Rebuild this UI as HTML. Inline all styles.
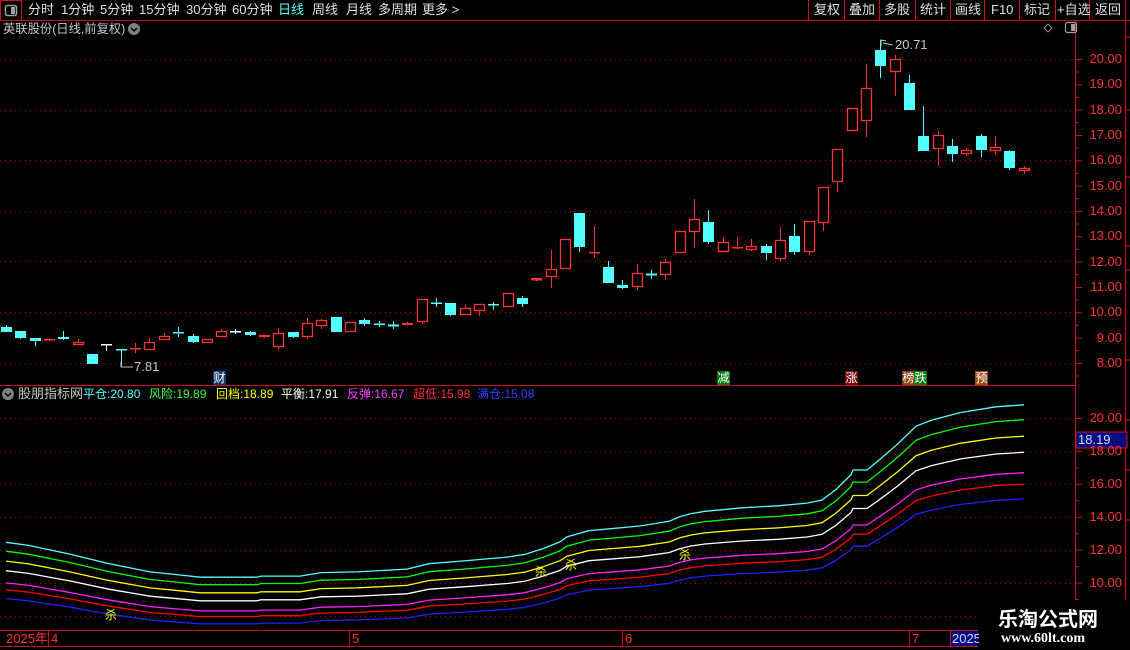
<!DOCTYPE html>
<html><head><meta charset="utf-8">
<style>
*{margin:0;padding:0;box-sizing:border-box}
body{width:1130px;height:650px;background:#000;overflow:hidden;position:relative;font-family:"Liberation Sans","Noto Sans CJK SC",sans-serif;font-size:13px;color:#fff}
.t{position:absolute;white-space:nowrap;line-height:14px}
.lg{font-size:12px}
svg{position:absolute;left:0;top:0}
.mk{position:absolute;width:13px;height:14px;font-size:12px;line-height:14px;text-align:center;color:#fff}
</style></head><body>
<svg id="s" width="1130" height="650" viewBox="0 0 1130 650" xmlns="http://www.w3.org/2000/svg">
<g id="grid" stroke="#c00000" stroke-width="1" stroke-dasharray="1,4">
<line x1="0" y1="59.5" x2="1075" y2="59.5"/><line x1="0" y1="110.5" x2="1075" y2="110.5"/><line x1="0" y1="160.5" x2="1075" y2="160.5"/><line x1="0" y1="211.5" x2="1075" y2="211.5"/><line x1="0" y1="261.5" x2="1075" y2="261.5"/><line x1="0" y1="312.5" x2="1075" y2="312.5"/><line x1="0" y1="363.5" x2="1075" y2="363.5"/>
<line x1="0" y1="418.5" x2="1075" y2="418.5"/><line x1="0" y1="451.5" x2="1075" y2="451.5"/><line x1="0" y1="484.5" x2="1075" y2="484.5"/><line x1="0" y1="517.5" x2="1075" y2="517.5"/><line x1="0" y1="550.5" x2="1075" y2="550.5"/><line x1="0" y1="583.5" x2="1075" y2="583.5"/><line x1="0" y1="616.5" x2="1075" y2="616.5"/>
</g>
<g stroke="#d01010" stroke-width="1" fill="none">
<line x1="0" y1="20.5" x2="1130" y2="20.5"/>
<rect x="0.5" y="0.5" width="21" height="20"/>
<line x1="808.5" y1="0" x2="808.5" y2="20"/><line x1="844.5" y1="0" x2="844.5" y2="20"/><line x1="879.5" y1="0" x2="879.5" y2="20"/><line x1="915.5" y1="0" x2="915.5" y2="20"/><line x1="950.5" y1="0" x2="950.5" y2="20"/><line x1="984.5" y1="0" x2="984.5" y2="20"/><line x1="1019.5" y1="0" x2="1019.5" y2="20"/><line x1="1055.5" y1="0" x2="1055.5" y2="20"/><line x1="1089.5" y1="0" x2="1089.5" y2="20"/><line x1="1125.5" y1="0" x2="1125.5" y2="20"/>
<line x1="1075.5" y1="20" x2="1075.5" y2="650"/>
<line x1="1125.5" y1="20" x2="1125.5" y2="600"/>
<line x1="0" y1="385.5" x2="1075" y2="385.5"/>
<line x1="0" y1="630.5" x2="978" y2="630.5"/>
<line x1="0" y1="646.5" x2="978" y2="646.5"/>
<line x1="48.5" y1="630" x2="48.5" y2="646"/><line x1="349.5" y1="630" x2="349.5" y2="646"/><line x1="622.5" y1="630" x2="622.5" y2="646"/><line x1="909.5" y1="630" x2="909.5" y2="646"/><line x1="950.5" y1="630" x2="950.5" y2="646"/>
</g>
<g id="ticks" stroke="#d01010"></g>
<g id="lines" fill="none" stroke-width="1.3"></g>
<g id="candles"></g>
<rect x="5.5" y="5.5" width="11" height="10" rx="2" fill="none" stroke="#a0a0a0" stroke-width="1.5"/>
<rect x="11" y="7" width="4" height="7" fill="#a0a0a0"/>
<rect x="1065.5" y="22.5" width="11" height="10" rx="2" fill="none" stroke="#a0a0a0" stroke-width="1.2"/>
<rect x="1071" y="24" width="4" height="7" fill="#a0a0a0"/>
<path d="M1048 24 L1052 28 L1048 32 L1044 28 Z" fill="none" stroke="#909090"/>
<circle cx="134" cy="29" r="6" fill="#808080"/><path d="M131 28 L134 31 L137 28" fill="none" stroke="#000" stroke-width="1.5"/>
<circle cx="8" cy="394" r="6" fill="#808080"/><path d="M5 393 L8 396 L11 393" fill="none" stroke="#000" stroke-width="1.5"/>
<path d="M121 367 L121 362 M121 367 L133 367" stroke="#c0c0c0" fill="none"/>
<path d="M881 47 L881 40 L886 41 M883 43 L893 45" stroke="#c0c0c0" fill="none"/>
<rect x="1076" y="432" width="51" height="16" fill="#0a0a80" stroke="#d01010"/>
<rect x="951" y="631" width="27" height="15" fill="#0a0a80"/>
</svg>

<div class="t" style="left:28px;top:3px;color:#e0e0e0">分时</div>
<div class="t" style="left:61px;top:3px;color:#e0e0e0">1分钟</div>
<div class="t" style="left:100px;top:3px;color:#e0e0e0">5分钟</div>
<div class="t" style="left:139px;top:3px;color:#e0e0e0">15分钟</div>
<div class="t" style="left:186px;top:3px;color:#e0e0e0">30分钟</div>
<div class="t" style="left:232px;top:3px;color:#e0e0e0">60分钟</div>
<div class="t" style="left:278px;top:3px;color:#54ffff">日线</div>
<div class="t" style="left:312px;top:3px;color:#e0e0e0">周线</div>
<div class="t" style="left:346px;top:3px;color:#e0e0e0">月线</div>
<div class="t" style="left:378px;top:3px;color:#e0e0e0">多周期</div>
<div class="t" style="left:422px;top:3px;color:#e0e0e0">更多 &gt;</div>

<div class="t" style="left:814px;top:3px;color:#e0e0e0">复权</div>
<div class="t" style="left:849px;top:3px;color:#e0e0e0">叠加</div>
<div class="t" style="left:884px;top:3px;color:#e0e0e0">多股</div>
<div class="t" style="left:920px;top:3px;color:#e0e0e0">统计</div>
<div class="t" style="left:955px;top:3px;color:#e0e0e0">画线</div>
<div class="t" style="left:991px;top:3px;color:#e0e0e0">F10</div>
<div class="t" style="left:1024px;top:3px;color:#e0e0e0">标记</div>
<div class="t" style="left:1057px;top:3px;color:#e0e0e0">+自选</div>
<div class="t" style="left:1095px;top:3px;color:#e0e0e0">返回</div>

<div class="t" style="left:3px;top:22px;color:#c8c8c8;font-size:12.3px">英联股份(日线,前复权)</div>
<div class="t" style="left:895px;top:38px;color:#c8c8c8">20.71</div>
<div class="t" style="left:134px;top:360px;color:#c8c8c8">7.81</div>

<div class="mk" style="left:213px;top:371px;background:#123a6e">财</div>
<div class="mk" style="left:717px;top:371px;background:#0a7a10">减</div>
<div class="mk" style="left:845px;top:371px;background:#7a0a0a">涨</div>
<div class="mk" style="left:902px;top:371px;background:#8a4010">榜</div>
<div class="mk" style="left:914px;top:371px;background:#0a7a10">跌</div>
<div class="mk" style="left:975px;top:371px;background:#a04a10">预</div>

<div class="t" style="left:18px;top:387px;color:#c8c8c8">股朋指标网</div>
<div class="t lg" style="left:83px;top:387px;color:#54ffff">平仓:20.80</div>
<div class="t lg" style="left:149px;top:387px;color:#40ff40">风险:19.89</div>
<div class="t lg" style="left:216px;top:387px;color:#ffff00">回档:18.89</div>
<div class="t lg" style="left:281px;top:387px;color:#ffffff">平衡:17.91</div>
<div class="t lg" style="left:347px;top:387px;color:#ff40ff">反弹:16.67</div>
<div class="t lg" style="left:413px;top:387px;color:#ff3030">超低:15.98</div>
<div class="t lg" style="left:477px;top:387px;color:#3040ff">满仓:15.08</div>

<div class="t" style="left:105px;top:608px;color:#ffff00;font-size:12px">杀</div>
<div class="t" style="left:535px;top:565px;color:#ffff00;font-size:12px">杀</div>
<div class="t" style="left:565px;top:558px;color:#ffff00;font-size:12px">杀</div>
<div class="t" style="left:679px;top:548px;color:#ffff00;font-size:12px">杀</div>

<div id="ax"></div>
<div class="t" style="left:1078px;top:433px;color:#c8d8ff">18.19</div>

<div class="t" style="left:6px;top:632px;color:#ff3232">2025年</div>
<div class="t" style="left:51px;top:632px;color:#ff3232">4</div>
<div class="t" style="left:352px;top:632px;color:#ff3232">5</div>
<div class="t" style="left:625px;top:632px;color:#ff3232">6</div>
<div class="t" style="left:912px;top:632px;color:#ff3232">7</div>
<div class="t" style="left:952px;top:632px;color:#c8d8ff">2025</div>

<div style="position:absolute;left:979px;top:600px;width:151px;height:50px;background:#000"></div>
<div class="t" style="left:998px;top:609px;font-size:20px;line-height:22px;font-weight:bold;color:#fff">乐淘公式网</div>
<div class="t" style="left:1001px;top:632px;font-family:'Liberation Serif',serif;font-size:14px;font-weight:bold;color:#fff">www.60lt.com</div>

<script>
var NS="http://www.w3.org/2000/svg";
function el(p,n,a){var e=document.createElementNS(NS,n);for(var k in a)e.setAttribute(k,a[k]);p.appendChild(e);return e;}
var C=[[6,327,332,325,332,'c'],[20,331,338,331,339,'c'],[35,338,341,338,346,'c'],[49,339,340,338,341,'r'],[63,337,339,331,340,'c'],[78,342,345,339,345,'r'],[92,354,364,354,364,'c'],[106,344,345,344,351,'w'],[121,349,350,349,367,'c'],[135,348,349.5,343,353,'r'],[149,342,350,338,350,'r'],[164,336,340,333,340,'r'],[178,332,333.5,327,337,'c'],[193,336,342,334,343,'c'],[207,339,343,339,343,'r'],[221,331,337,329,337,'r'],[235,331,332.5,329,334,'w'],[250,332,335,331,336,'c'],[264,335,337,335,338,'r'],[278,333,347,328,350,'r'],[293,332,337,332,338,'c'],[307,323,337,318,339,'r'],[321,320,326,319,329,'r'],[336,317,332,317,332,'c'],[350,322,332,322,332,'r'],[364,320,324,318,326,'c'],[379,323.5,325,321,327,'c'],[393,324.5,326.5,321,329,'c'],[407,323,325,322,325,'r'],[422,299,322,299,324,'r'],[436,302.5,304,298,307,'c'],[450,303,315,303,316,'c'],[465,308,315,304,315,'r'],[479,304,311,304,316,'r'],[493,304,305.5,302,310,'c'],[508,293,307,293,307,'r'],[522,298,304,296,307,'c'],[536,278,280.5,278,281,'r'],[551,269,277,250,288,'r'],[565,239,269,239,269,'r'],[579,213,247,213,252,'c'],[594,252,253.5,226,258,'r'],[608,267,283,261,283,'c'],[622,285,288,280,289,'c'],[637,273,287,264,290,'r'],[651,273.5,275.5,270,279,'c'],[665,262,275,259,280,'r'],[680,231,253,231,253,'r'],[694,219,232,199,248,'r'],[708,222,242,210,244,'c'],[723,242,252,237,252,'r'],[737,247,248.5,237,249,'r'],[751,246,250,239,251,'r'],[766,246,253,244,260,'c'],[780,240,259,227,261,'r'],[794,236,252,224,255,'c'],[809,221,252,221,255,'r'],[823,187,223,187,231,'r'],[837,149,182,149,192,'r'],[852,108,131,108,131,'r'],[866,88,121,64,137,'r'],[880,50,66,40,78,'c'],[895,59,72,55,96,'r'],[909,83,110,75,110,'c'],[923,136,151,106,151,'c'],[938,135,149,131,166,'r'],[952,146,154,139,162,'c'],[966,150,154,148,156,'r'],[981,136,150,134,157,'c'],[995,147,151,136,155,'r'],[1009,151,168,150,170,'c'],[1024,168,171,166,174,'r']];
var g=document.getElementById('candles');
C.forEach(function(c){var x=c[0],col=c[5]=='c'?'#54ffff':(c[5]=='w'?'#ffffff':'#ff3232');
el(g,'line',{x1:x+.5,y1:c[3],x2:x+.5,y2:c[4],stroke:col,'stroke-width':1});
var h=c[2]-c[1];
if(h<3){el(g,'rect',{x:x-5,y:c[1],width:11,height:Math.max(1.5,h),fill:col});}
else if(c[5]=='r'){el(g,'rect',{x:x-4.5,y:c[1]+.5,width:10,height:h-1,fill:'#000',stroke:col,'stroke-width':1.3});}
else{el(g,'rect',{x:x-5,y:c[1],width:11,height:h,fill:col});}
});
var W=[[6,571.3],[28.6,574],[71,581.7],[107,589.3],[150,596.7],[179,599.3],[200,601.3],[257,601.3],[261,600.3],[300,600.3],[321,597.3],[357,596.7],[371,596],[407,594.3],[429,589.7],[464,587.3],[507,584],[525,581.7],[543,576.7],[560,571],[567,566.7],[589,561.3],[615,559.3],[640,557.3],[669,553.3],[680,549.3],[691,546.7],[705,544.7],[742,541.7],[778,540],[807,537.7],[822,535],[836,526],[851,513.3],[853,509.3],[867,509.3],[880,500],[898,486.7],[916,471.7],[931,466.7],[960,460],[996,455],[1024,453.3]];
var F=[[1.1613,'#54ffff'],[1.1105,'#00ff00'],[1.0547,'#ffff00'],[1,'#ffffff'],[0.9308,'#ff20ff'],[0.8922,'#ff0000'],[0.842,'#2020ff']];
var lg=document.getElementById('lines');
F.forEach(function(f){var pts=W.map(function(p){var v=20-(p[1]-418)/16.45;v*=f[0]*17.91/17.85;var y=418+(20-v)*16.45;return p[0]+','+y.toFixed(1);}).join(' ');
el(lg,'polyline',{points:pts,stroke:f[1]});});
var tk=document.getElementById('ticks'),ax=document.getElementById('ax');
function lab(y,t){var d=document.createElement('div');d.className='t';d.style.cssText='left:1082px;top:'+(y-7)+'px;width:40px;text-align:right;color:#ff3232';d.textContent=t;ax.appendChild(d);}
for(var p=20;p>=8;p--){var y=59+(20-p)*25.33;el(tk,'line',{x1:1075,y1:y+.5,x2:1082,y2:y+.5});el(tk,'line',{x1:1075,y1:y+13,x2:1079,y2:y+13});lab(y,p.toFixed(2));}
for(var p=20;p>=10;p-=2){var y=418+(20-p)*16.45;el(tk,'line',{x1:1075,y1:y+.5,x2:1082,y2:y+.5});el(tk,'line',{x1:1075,y1:y+17,x2:1079,y2:y+17});lab(y,p.toFixed(2));}
[20.5,37,110,177,246,270,360,420,470,520].forEach(function(y){el(tk,'line',{x1:1125,y1:y,x2:1130,y2:y});});
</script>
</body></html>
